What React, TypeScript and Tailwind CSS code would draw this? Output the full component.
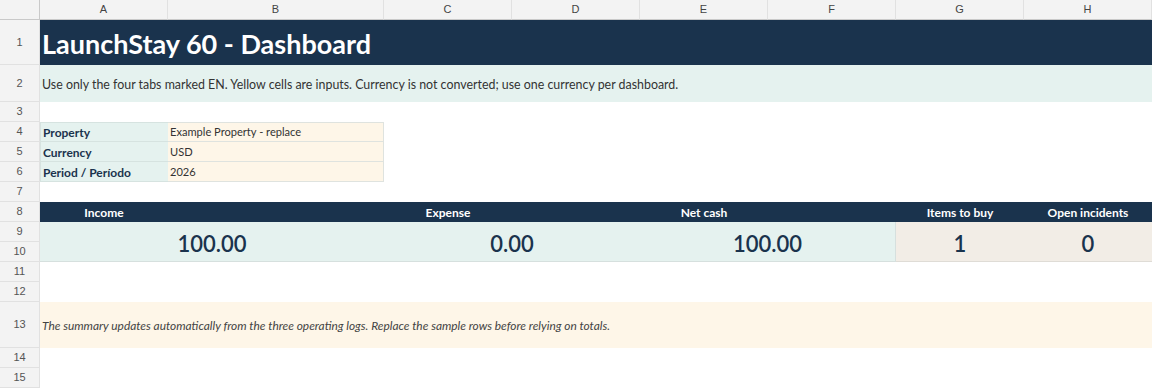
import React from 'react';

const cols = ['A', 'B', 'C', 'D', 'E', 'F', 'G', 'H'];

const RowNum = ({ n, className = '' }: { n: number; className?: string }) => (
  <div
    className={`flex items-center justify-center bg-[#f3f3f3] border-r border-b border-[#e1e1e1] text-[11px] text-[#555] font-['Liberation_Sans',sans-serif] ${className}`}
  >
    {n}
  </div>
);

const Blank = ({ span = 'col-span-8' }: { span?: string }) => <div className={`${span} bg-white`} />;

const info = [
  { label: 'Property', value: 'Example Property - replace' },
  { label: 'Currency', value: 'USD' },
  { label: 'Period / Período', value: '2026' },
];

const App: React.FC = () => {
  return (
    <div className="w-[1152px] h-[388px] overflow-hidden bg-white font-['Lato',sans-serif]">
      <div className="grid grid-cols-[40px_128px_216px_128px_128px_128px_128px_128px_128px] grid-rows-[20px_45px_37px_repeat(10,20px)_46px_20px_20px]">
        {/* column headers */}
        <div className="bg-[#f3f3f3] border-r border-b border-[#c9c9c9]" />
        {cols.map((c) => (
          <div
            key={c}
            className="flex items-center justify-center bg-[#f3f3f3] border-r border-[#e1e1e1] border-b border-b-[#c9c9c9] text-[11px] text-[#444] font-['Liberation_Sans',sans-serif]"
          >
            {c}
          </div>
        ))}

        {/* 1: title */}
        <RowNum n={1} />
        <div className="col-span-8 flex items-center bg-[#1a334d] pl-[2px] pt-[1px] text-[27px] font-bold text-white leading-none">
          LaunchStay 60 - Dashboard
        </div>

        {/* 2: instructions */}
        <RowNum n={2} />
        <div className="col-span-8 flex items-center bg-[#e5f2ef] pl-[2px] pt-[3px] text-[12.4px] text-[#333]">
          Use only the four tabs marked EN. Yellow cells are inputs. Currency is not converted; use one currency per dashboard.
        </div>

        <RowNum n={3} />
        <Blank />

        {/* 4-6: inputs */}
        {info.map((r, i) => (
          <React.Fragment key={r.label}>
            <RowNum n={4 + i} />
            <div
              className={`flex items-center bg-[#e5f2ef] pl-[2px] pt-[2px] text-[12px] font-bold text-[#1a334d] border-l border-b border-[#d6e3e0] ${i === 0 ? 'border-t' : ''}`}
            >
              {r.label}
            </div>
            <div
              className={`flex items-center bg-[#fef6e8] pl-[2px] pt-[1px] text-[11.1px] text-[#333] border-r border-b border-[#dfe3df] ${i === 0 ? 'border-t' : ''}`}
            >
              {r.value}
            </div>
            <Blank span="col-span-6" />
          </React.Fragment>
        ))}

        <RowNum n={7} />
        <Blank />

        {/* 8: KPI labels */}
        <RowNum n={8} />
        {['Income', '', 'Expense', '', 'Net cash', '', 'Items to buy', 'Open incidents'].map((t, i) => (
          <div
            key={i}
            className="flex items-center justify-center bg-[#1a334d] pt-[2px] text-[12px] font-bold text-white"
          >
            {t}
          </div>
        ))}

        {/* 9-10: KPI values */}
        <RowNum n={9} />
        <div className="col-span-2 row-span-2 flex items-center justify-center bg-[#e5f2ef] pt-[4px] border-b border-[#d6e0de] text-[22px] font-semibold text-[#1a334d]">
          100.00
        </div>
        <div className="col-span-2 row-span-2 flex items-center justify-center bg-[#e5f2ef] pt-[4px] border-b border-[#d6e0de] text-[22px] font-semibold text-[#1a334d]">
          0.00
        </div>
        <div className="col-span-2 row-span-2 flex items-center justify-center bg-[#e5f2ef] pt-[4px] border-r border-b border-[#d6e0de] text-[22px] font-semibold text-[#1a334d]">
          100.00
        </div>
        <div className="row-span-2 flex items-center justify-center bg-[#f2ede6] pt-[4px] border-b border-[#dfdcd6] text-[22px] font-semibold text-[#1a334d]">
          1
        </div>
        <div className="row-span-2 flex items-center justify-center bg-[#f2ede6] pt-[4px] border-b border-[#dfdcd6] text-[22px] font-semibold text-[#1a334d]">
          0
        </div>
        <RowNum n={10} className="col-start-1 row-start-[11]" />

        <RowNum n={11} />
        <Blank />
        <RowNum n={12} />
        <Blank />

        {/* 13: note */}
        <RowNum n={13} />
        <div className="col-span-8 flex items-center bg-[#fef6e8] pl-[2px] pt-[1px] text-[11.9px] italic text-[#444]">
          The summary updates automatically from the three operating logs. Replace the sample rows before relying on totals.
        </div>

        <RowNum n={14} />
        <Blank />
        <RowNum n={15} />
        <Blank />
      </div>
    </div>
  );
};

export default App;
